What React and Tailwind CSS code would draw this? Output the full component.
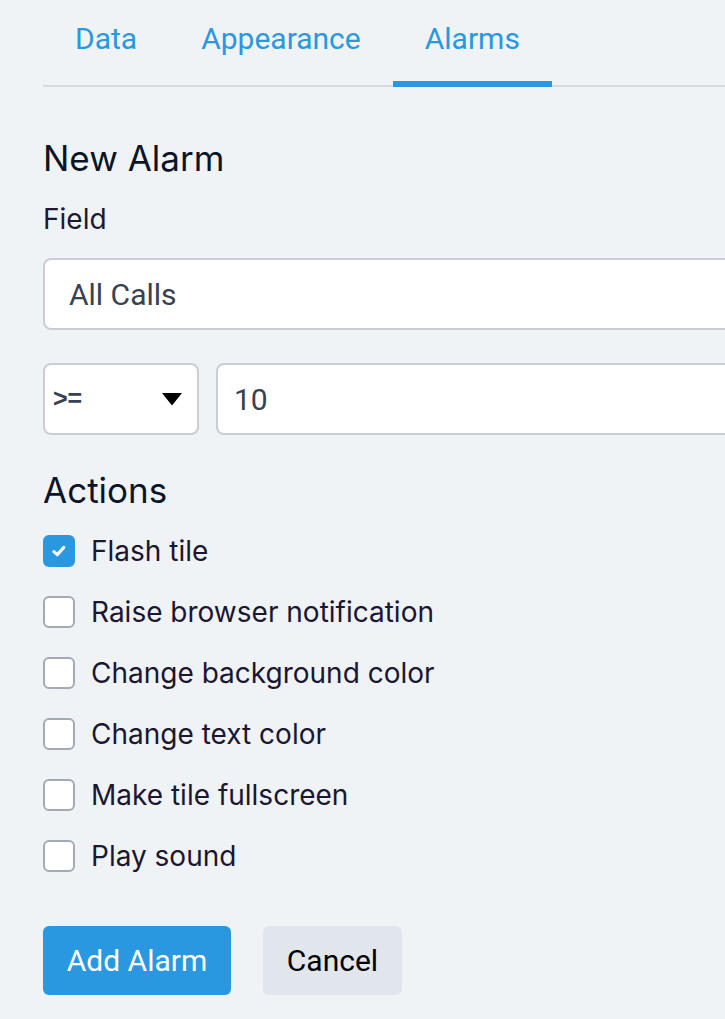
import React from "react";

const actions = [
  { label: "Flash tile", checked: true },
  { label: "Raise browser notification", checked: false },
  { label: "Change background color", checked: false },
  { label: "Change text color", checked: false },
  { label: "Make tile fullscreen", checked: false },
  { label: "Play sound", checked: false },
];

function Checkbox({ checked }) {
  if (checked) {
    return (
      <span className="flex h-[32px] w-[32px] shrink-0 items-center justify-center rounded-[6px] bg-[#2998e0]">
        <svg width="18" height="18" viewBox="0 0 16 16" fill="none">
          <path d="M3.5 8.5 L6.5 11.3 L12.3 4.8" stroke="white" strokeWidth="2.8" strokeLinecap="round" strokeLinejoin="round" />
        </svg>
      </span>
    );
  }
  return <span className="block h-[32px] w-[32px] shrink-0 rounded-[6px] border-2 border-[#a3aab5] bg-white" />;
}

export default function App() {
  return (
    <div className="min-h-[1019px] w-full overflow-hidden bg-[#f0f3f5]">
      <div className="pl-[43px]">
        <div className="flex w-[760px] border-b-2 border-[#d6dae0] font-['Roboto',sans-serif] text-[30px] text-[#2998e0]">
          <div className="mb-[-2px] border-b-[6px] border-transparent px-[32px] pt-[22px] pb-[25px] leading-[34px]">Data</div>
          <div className="mb-[-2px] border-b-[6px] border-transparent px-[32px] pt-[22px] pb-[25px] leading-[34px]">Appearance</div>
          <div className="mb-[-2px] border-b-[6px] border-[#2998e0] px-[32px] pt-[22px] pb-[25px] leading-[34px]">Alarms</div>
        </div>

        <h2 className="mt-[50px] font-['Inter',sans-serif] text-[35px] leading-[42px] text-[#0c1427]">New Alarm</h2>
        <div className="mt-[24px] font-['Inter',sans-serif] text-[28px] leading-[33px] text-[#1d1930]">Field</div>

        <div className="mt-[22px] flex h-[72px] w-[720px] items-center rounded-[8px] border-2 border-[#c9ced6] bg-white px-[24px] font-['Roboto',sans-serif] text-[30px] text-[#374151]">
          All Calls
        </div>

        <div className="mt-[33px] flex gap-[17px]">
          <div className="flex h-[72px] w-[156px] shrink-0 items-center justify-between rounded-[8px] border-2 border-[#c9ced6] bg-white pl-[8px] pr-[15px]">
            <span className="font-['Liberation_Sans',sans-serif] text-[25px] font-bold text-[#374151]">&gt;=</span>
            <svg width="20" height="13" viewBox="0 0 20 13">
              <polygon points="0,0 20,0 10,12.5" fill="#000" />
            </svg>
          </div>
          <div className="flex h-[72px] w-[560px] shrink-0 items-center rounded-[8px] border-2 border-[#c9ced6] bg-white pl-[16px] font-['Roboto',sans-serif] text-[30px] text-[#374151]">
            10
          </div>
        </div>

        <h2 className="mt-[34px] font-['Inter',sans-serif] text-[35px] leading-[42px] text-[#0c1427]">Actions</h2>

        <div className="mt-[24px] flex flex-col gap-[29px]">
          {actions.map((a) => (
            <div key={a.label} className="flex items-center gap-[16px]">
              <Checkbox checked={a.checked} />
              <span className="font-['Inter',sans-serif] text-[28px] leading-[32px] text-[#1b1631]">{a.label}</span>
            </div>
          ))}
        </div>

        <div className="mt-[54px] flex gap-[32px] font-['Roboto',sans-serif] text-[30px]">
          <button className="flex h-[69px] w-[188px] shrink-0 items-center justify-center rounded-[6px] bg-[#2998e0] text-white">Add Alarm</button>
          <button className="flex h-[69px] w-[139px] shrink-0 items-center justify-center rounded-[6px] bg-[#e1e5ec] text-black">Cancel</button>
        </div>
      </div>
    </div>
  );
}
